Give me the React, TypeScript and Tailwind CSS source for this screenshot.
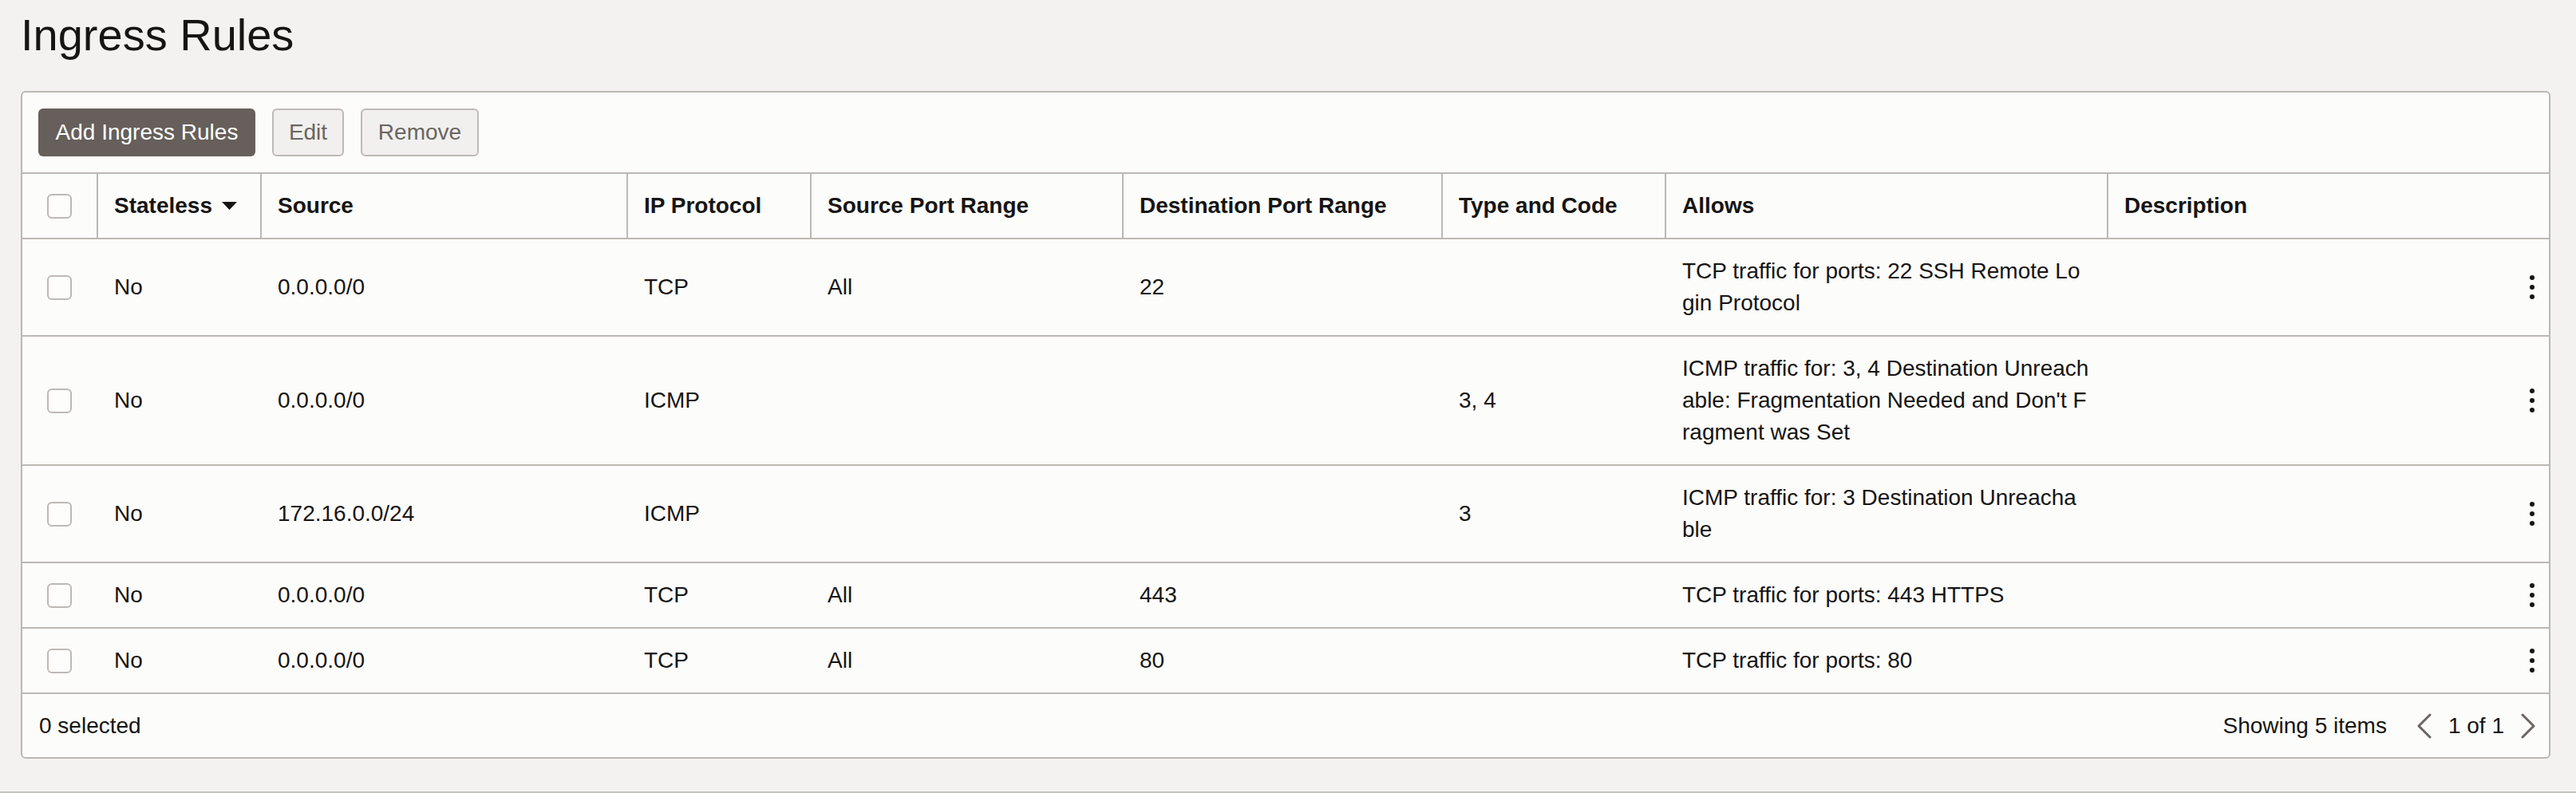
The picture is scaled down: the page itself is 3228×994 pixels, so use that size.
import { Fragment } from "react";

const cols = [
  { key: "stateless", label: "Stateless", sort: true },
  { key: "source", label: "Source" },
  { key: "protocol", label: "IP Protocol" },
  { key: "srcPort", label: "Source Port Range" },
  { key: "dstPort", label: "Destination Port Range" },
  { key: "typeCode", label: "Type and Code" },
  { key: "allows", label: "Allows" },
  { key: "description", label: "Description" },
] as const;

type Rule = {
  stateless: string;
  source: string;
  protocol: string;
  srcPort: string;
  dstPort: string;
  typeCode: string;
  allows: string[];
  description: string;
};

const rules: Rule[] = [
  {
    stateless: "No",
    source: "0.0.0.0/0",
    protocol: "TCP",
    srcPort: "All",
    dstPort: "22",
    typeCode: "",
    allows: ["TCP traffic for ports: 22 SSH Remote Lo", "gin Protocol"],
    description: "",
  },
  {
    stateless: "No",
    source: "0.0.0.0/0",
    protocol: "ICMP",
    srcPort: "",
    dstPort: "",
    typeCode: "3, 4",
    allows: [
      "ICMP traffic for: 3, 4 Destination Unreach",
      "able: Fragmentation Needed and Don't F",
      "ragment was Set",
    ],
    description: "",
  },
  {
    stateless: "No",
    source: "172.16.0.0/24",
    protocol: "ICMP",
    srcPort: "",
    dstPort: "",
    typeCode: "3",
    allows: ["ICMP traffic for: 3 Destination Unreacha", "ble"],
    description: "",
  },
  {
    stateless: "No",
    source: "0.0.0.0/0",
    protocol: "TCP",
    srcPort: "All",
    dstPort: "443",
    typeCode: "",
    allows: ["TCP traffic for ports: 443 HTTPS"],
    description: "",
  },
  {
    stateless: "No",
    source: "0.0.0.0/0",
    protocol: "TCP",
    srcPort: "All",
    dstPort: "80",
    typeCode: "",
    allows: ["TCP traffic for ports: 80"],
    description: "",
  },
];

const gridCols =
  "grid grid-cols-[93px_205px_459px_230px_391px_400px_280px_554px_minmax(0,1fr)]";

const Checkbox = () => (
  <div className="h-[31px] w-[31px] rounded-[6px] border-2 border-[#bdb9b4] bg-[#fdfdfc]" />
);

const Kebab = () => (
  <div className="flex flex-col items-center gap-[6px]">
    <span className="h-[6px] w-[6px] rounded-full bg-[#161513]" />
    <span className="h-[6px] w-[6px] rounded-full bg-[#161513]" />
    <span className="h-[6px] w-[6px] rounded-full bg-[#161513]" />
  </div>
);

const Chevron = ({ dir }: { dir: "left" | "right" }) => (
  <svg width="20" height="32" viewBox="0 0 20 32" fill="none">
    <polyline
      points={dir === "left" ? "17,2 3,16 17,30" : "3,2 17,16 3,30"}
      stroke="#6b6560"
      strokeWidth="3"
      strokeLinecap="round"
      strokeLinejoin="round"
    />
  </svg>
);

export default function App() {
  return (
    <div className="box-border h-[994px] border-b-2 border-[#c4c0bb] bg-[#f3f2f1] pl-[26px] pr-[32px] font-['Liberation_Sans',Arial,sans-serif] text-[#161513]">
      <h1 className="mb-[38px] pt-[12px] text-[56px] leading-[64px] font-normal">
        Ingress Rules
      </h1>

      <div className="rounded-[6px] border-2 border-[#bcb8b3] bg-[#fcfcfb] text-[28px] leading-[40px]">
        <div className="flex items-center gap-[21px] px-[20px] py-[20px]">
          <button className="flex h-[60px] w-[272px] items-center justify-center rounded-[6px] bg-[#665f5b] text-white">
            Add Ingress Rules
          </button>
          <button className="flex h-[60px] w-[90px] items-center justify-center rounded-[6px] border-2 border-[#bfbab5] bg-[#f1f0ee] text-[#6b6560]">
            Edit
          </button>
          <button className="flex h-[60px] w-[148px] items-center justify-center rounded-[6px] border-2 border-[#bfbab5] bg-[#f1f0ee] text-[#6b6560]">
            Remove
          </button>
        </div>

        <div className={`${gridCols} border-t-2 border-[#bcb8b3]`}>
          <div className="flex items-center justify-center py-5">
            <Checkbox />
          </div>
          {cols.map((c) => (
            <div
              key={c.key}
              className="flex items-center border-l-2 border-[#bcb8b3] px-5 py-5 font-bold whitespace-nowrap"
            >
              {c.label}
              {"sort" in c && (
                <svg className="ml-[12px]" width="19" height="10" viewBox="0 0 19 10">
                  <polygon points="0,0 19,0 9.5,10" fill="#161513" />
                </svg>
              )}
            </div>
          ))}
        </div>

        {rules.map((r, i) => (
          <div key={i} className={`${gridCols} border-t-2 border-[#bcb8b3]`}>
            <div className="flex items-center justify-center py-5">
              <Checkbox />
            </div>
            {cols.map((c) => (
              <Fragment key={c.key}>
                {c.key === "allows" ? (
                  <div className="flex flex-col justify-center border-l-2 border-transparent px-5 py-5 whitespace-nowrap">
                    {r.allows.map((line) => (
                      <div key={line}>{line}</div>
                    ))}
                  </div>
                ) : c.key === "description" ? (
                  <div className="flex items-center justify-between border-l-2 border-transparent py-5 pl-5 pr-[18px]">
                    <span>{r.description}</span>
                    <Kebab />
                  </div>
                ) : (
                  <div className="flex items-center border-l-2 border-transparent px-5 py-5 whitespace-nowrap">
                    {r[c.key]}
                  </div>
                )}
              </Fragment>
            ))}
          </div>
        ))}

        <div className="flex items-center justify-between border-t-2 border-[#bcb8b3] pt-[20px] pb-[19px] pl-[21px] pr-[16px]">
          <span>0 selected</span>
          <div className="flex items-center">
            <span>Showing 5 items</span>
            <div className="ml-[37px] flex items-center gap-[20px]">
              <Chevron dir="left" />
              <span>1 of 1</span>
              <Chevron dir="right" />
            </div>
          </div>
        </div>
      </div>
    </div>
  );
}
